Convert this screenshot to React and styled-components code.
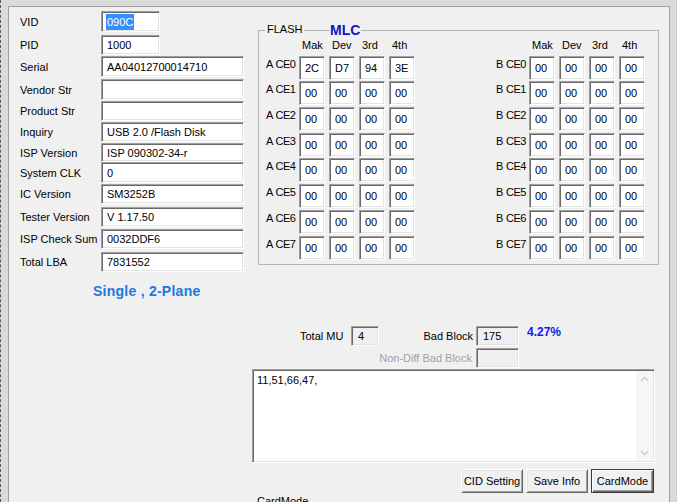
import React from "react";
import styled, { createGlobalStyle } from "styled-components";

const GlobalStyle = createGlobalStyle`
  html, body { margin: 0; padding: 0; overflow: hidden; background: #dadada; }
  body { font-family: "Liberation Sans", Arial, sans-serif; font-size: 11px; color: #000; }
`;

const Window = styled.div`
  width: 677px;
  height: 502px;
  display: flex;
  background: #dadada;
  overflow: hidden;
`;

const LeftEdge = styled.div`
  width: 8px;
  flex: none;
  box-sizing: border-box;
  border-left: 1px dashed #5a5a5a;
  background: #dadada;
`;

const RightEdge = styled.div`
  width: 7px;
  flex: none;
  box-sizing: border-box;
  border-right: 1px solid #cfcfcf;
`;

const Panel = styled.div`
  width: 662px;
  flex: none;
  margin-top: 6px;
  height: 560px;
  box-sizing: border-box;
  background: #f0f0f0;
  border: 1px solid #a0a0a0;
  border-bottom: none;
  display: flex;
`;

const LeftCol = styled.div`
  width: 241px;
  flex: none;
  box-sizing: border-box;
  padding: 4px 0 0 11px;
  display: flex;
  flex-direction: column;
`;

const Row = styled.div`
  display: flex;
  align-items: center;
  height: ${(p) => p.$h}px;
  margin-top: ${(p) => p.$mt}px;
`;

const FieldLabel = styled.div`
  width: 81px;
  flex: none;
  white-space: nowrap;
`;

const Sunken = styled.div`
  box-sizing: border-box;
  background: ${(p) => (p.$readonly ? "#f0f0f0" : "#fff")};
  border: 1px solid;
  border-color: #a0a0a0 #fff #fff #a0a0a0;
  box-shadow: inset 1px 1px 0 #696969, inset -1px -1px 0 #e3e3e3;
  display: flex;
  align-items: center;
  white-space: nowrap;
  overflow: hidden;
`;

const Field = styled(Sunken)`
  width: ${(p) => (p.$wide ? 143 : 59)}px;
  height: 100%;
  padding-left: 5px;
`;

const Selected = styled.span`
  background: #3390ff;
  color: #fff;
  line-height: 16px;
  padding: 0 1px;
  margin-left: -1px;
`;

const PlaneText = styled.div`
  margin: 11px 0 0 73px;
  font-size: 14px;
  line-height: 16px;
  letter-spacing: 0.25px;
  font-weight: bold;
  color: #1a78e0;
`;

const RightCol = styled.div`
  flex: 1;
  display: flex;
  flex-direction: column;
  padding-top: 23px;
`;

const GroupBox = styled.div`
  position: relative;
  margin-left: 8px;
  width: 401px;
  height: 235px;
  box-sizing: border-box;
  border: 1px solid #b4b4b4;
  padding: 8px 0 0 7px;
  display: flex;
  gap: 81px;
`;

const Legend = styled.div`
  position: absolute;
  left: 6px;
  top: -8px;
  padding: 0 2px;
  background: #f0f0f0;
  line-height: 13px;
`;

const TypeTag = styled.div`
  position: absolute;
  left: 70px;
  top: -9px;
  padding: 0 1px;
  background: #f0f0f0;
  color: #1414c8;
  font-weight: bold;
  font-size: 14px;
  line-height: 16px;
`;

const CeGrid = styled.div`
  display: grid;
  grid-template-columns: ${(p) => p.$labelW}px repeat(4, 26px);
  grid-auto-rows: 24px;
  grid-template-rows: 15px;
  column-gap: 4px;
  row-gap: 1.7px;
`;

const ColHead = styled.div`
  padding-left: 3px;
  line-height: 13px;
`;

const CeLabel = styled.div`
  padding-top: 2px;
  line-height: 13px;
  white-space: nowrap;
  letter-spacing: -0.45px;
  word-spacing: 0.5px;
`;

const Cell = styled(Sunken)`
  padding-left: 5px;
`;

const CountRow = styled.div`
  display: flex;
  align-items: center;
  height: 20px;
  margin-top: ${(p) => p.$mt}px;
  padding-left: ${(p) => p.$pl}px;
`;

const CountLabel = styled.div`
  width: ${(p) => p.$w}px;
  flex: none;
  box-sizing: border-box;
  text-align: ${(p) => (p.$right ? "right" : "left")};
  padding-right: ${(p) => (p.$right ? p.$pr : 0)}px;
  color: ${(p) => (p.$disabled ? "#a0a0a0" : "#000")};
  white-space: nowrap;
`;

const CountBox = styled(Sunken)`
  width: ${(p) => p.$w}px;
  height: 20px;
  padding-left: 6px;
`;

const Percent = styled.div`
  align-self: flex-start;
  margin: -1px 0 0 8px;
  font-size: 12px;
  line-height: 14px;
  font-weight: bold;
  color: #1414ff;
`;

const LogBox = styled.div`
  margin: 1px 0 0 2px;
  width: 403px;
  height: 94px;
  box-sizing: border-box;
  background: #fff;
  border: 1px solid;
  border-color: #a0a0a0 #fff #fff #a0a0a0;
  box-shadow: inset 1px 1px 0 #696969, inset -1px -1px 0 #e3e3e3;
  display: flex;
`;

const LogText = styled.div`
  flex: 1;
  padding: 4px 0 0 4px;
  line-height: 13px;
`;

const ScrollBar = styled.div`
  width: 17px;
  margin: 1px 1px 1px 0;
  background: #f6f6f6;
  display: flex;
  flex-direction: column;
  justify-content: space-between;
  align-items: center;
  padding: 5px 0;
  box-sizing: border-box;
`;

const ButtonRow = styled.div`
  display: flex;
  justify-content: flex-end;
  gap: 3px;
  margin-top: 6px;
  padding-right: 15px;
`;

const Button = styled.button`
  width: ${(p) => p.$w}px;
  height: 24px;
  box-sizing: border-box;
  font-family: "Liberation Sans", Arial, sans-serif;
  font-size: 11px;
  color: #000;
  background: #f0f0f0;
  padding: 0;
  border: 1px solid;
  border-color: ${(p) => (p.$default ? "#3c3c3c" : "#fff #696969 #696969 #fff")};
  box-shadow: ${(p) =>
    p.$default
      ? "inset 1px 1px 0 #fff, inset -1px -1px 0 #696969, inset -2px -2px 0 #a0a0a0"
      : "inset 1px 1px 0 #e3e3e3, inset -1px -1px 0 #a0a0a0"};
`;

const BottomLabel = styled.div`
  margin: 2px 0 0 7px;
  line-height: 13px;
`;

const fields = [
  { label: "VID", value: "090C", h: 21, mt: 0, selected: true },
  { label: "PID", value: "1000", h: 20, mt: 3 },
  { label: "Serial", value: "AA04012700014710", h: 21, mt: 1, wide: true },
  { label: "Vendor Str", value: "", h: 21, mt: 2, wide: true },
  { label: "Product Str", value: "", h: 20, mt: 1, wide: true },
  { label: "Inquiry", value: "USB 2.0 /Flash Disk", h: 20, mt: 1, wide: true },
  { label: "ISP Version", value: "ISP 090302-34-r", h: 19, mt: 1, wide: true },
  { label: "System CLK", value: "0", h: 21, mt: 0, wide: true },
  { label: "IC Version", value: "SM3252B", h: 20, mt: 1, wide: true },
  { label: "Tester Version", value: "V 1.17.50", h: 20, mt: 3, wide: true },
  { label: "ISP Check Sum", value: "0032DDF6", h: 20, mt: 2, wide: true },
  { label: "Total LBA", value: "7831552", h: 20, mt: 3, wide: true },
];

const heads = ["Mak", "Dev", "3rd", "4th"];

const aIds = [["2C", "D7", "94", "3E"]];
for (let i = 1; i < 8; i++) aIds.push(["00", "00", "00", "00"]);
const bIds = [];
for (let i = 0; i < 8; i++) bIds.push(["00", "00", "00", "00"]);

function CeBlock({ bank, ids, labelW }) {
  return (
    <CeGrid $labelW={labelW}>
      <div />
      {heads.map((h) => (
        <ColHead key={h}>{h}</ColHead>
      ))}
      {ids.map((row, i) => (
        <React.Fragment key={i}>
          <CeLabel>{`${bank} CE${i}`}</CeLabel>
          {row.map((v, j) => (
            <Cell key={j}>{v}</Cell>
          ))}
        </React.Fragment>
      ))}
    </CeGrid>
  );
}

const Chevron = ({ up }) => (
  <svg width="9" height="6" viewBox="0 0 9 6">
    <path
      d={up ? "M1 5 L4.5 1.5 L8 5" : "M1 1 L4.5 4.5 L8 1"}
      fill="none"
      stroke="#c8c8c8"
      strokeWidth="1.4"
    />
  </svg>
);

export default function App() {
  return (
    <>
      <GlobalStyle />
      <Window>
        <LeftEdge />
        <Panel>
          <LeftCol>
            {fields.map((f) => (
              <Row key={f.label} $h={f.h} $mt={f.mt}>
                <FieldLabel>{f.label}</FieldLabel>
                <Field $wide={f.wide}>
                  {f.selected ? <Selected>{f.value}</Selected> : f.value}
                </Field>
              </Row>
            ))}
            <PlaneText>Single , 2-Plane</PlaneText>
          </LeftCol>
          <RightCol>
            <GroupBox>
              <Legend>FLASH</Legend>
              <TypeTag>MLC</TypeTag>
              <CeBlock bank="A" ids={aIds} labelW={29} />
              <CeBlock bank="B" ids={bIds} labelW={29} />
            </GroupBox>
            <CountRow $mt={61} $pl={50}>
              <CountLabel $w={51}>Total MU</CountLabel>
              <CountBox $w={28} $readonly>4</CountBox>
              <CountLabel $w={97} $right $pr={3}>Bad Block</CountLabel>
              <CountBox $w={43} $readonly>175</CountBox>
              <Percent>4.27%</Percent>
            </CountRow>
            <CountRow $mt={2} $pl={0}>
              <CountLabel $w={226} $right $pr={4} $disabled>
                Non-Diff Bad Block
              </CountLabel>
              <CountBox $w={43} $readonly />
            </CountRow>
            <LogBox>
              <LogText>11,51,66,47,</LogText>
              <ScrollBar>
                <Chevron up />
                <Chevron />
              </ScrollBar>
            </LogBox>
            <ButtonRow>
              <Button $w={62}>CID Setting</Button>
              <Button $w={62}>Save Info</Button>
              <Button $w={63} $default>CardMode</Button>
            </ButtonRow>
            <BottomLabel>CardMode</BottomLabel>
          </RightCol>
        </Panel>
        <RightEdge />
      </Window>
    </>
  );
}
